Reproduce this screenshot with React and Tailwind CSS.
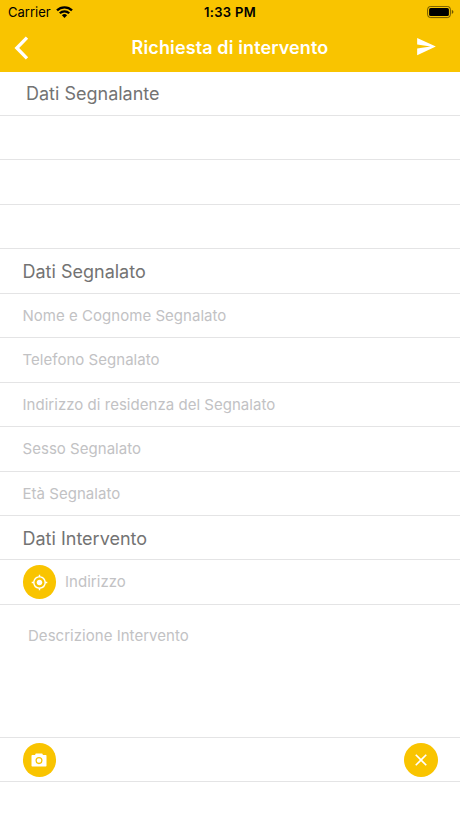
import React from 'react'
import { MdMyLocation, MdClose } from "react-icons/md";
import { IoMdSend } from "react-icons/io";

const reporterRows = ["nome", "telefono", "email"];

const reportedFields = [
  "Nome e Cognome Segnalato",
  "Telefono Segnalato",
  "Indirizzo di residenza del Segnalato",
  "Sesso Segnalato",
  "Età Segnalato",
];

const StatusBar = () => (
  <div className="h-6 grid grid-cols-3 items-center pl-2 pr-[5px] text-black">
    <div className="flex items-center gap-[5px]">
      <span className="text-[13px] leading-6 tracking-[0.02px]">Carrier</span>
      <svg width="17" height="12" viewBox="0 0 17 12" fill="none" stroke="#000" strokeWidth="2.3">
        <path d="M1 4.4a10.6 10.6 0 0 1 15 0" />
        <path d="M3.8 7.3a6.7 6.7 0 0 1 9.4 0" />
        <path d="M8.5 12 5.9 9.3a3.7 3.7 0 0 1 5.2 0Z" fill="#000" stroke="none" />
      </svg>
    </div>
    <span className="text-center text-[13px] leading-6 font-semibold tracking-[0.3px] -ml-[3px]">1:33 PM</span>
    <svg className="justify-self-end" width="28" height="13" viewBox="0 0 28 13">
      <rect x="0.6" y="0.4" width="22.8" height="11.2" rx="3" fill="none" stroke="#000" strokeOpacity="0.55" />
      <rect x="2.1" y="1.9" width="19.8" height="8.2" rx="1.6" fill="#000" />
      <path d="M24.8 4.1v3.8c1.1-.4 1.6-1.1 1.6-1.9s-.5-1.5-1.6-1.9Z" fill="#000" fillOpacity="0.55" />
    </svg>
  </div>
);

const NavBar = () => (
  <div className="flex-1 flex items-center justify-between pl-[14px] pr-[22px]">
    <button aria-label="Indietro" className="w-[31px]">
      <svg width="16" height="24" viewBox="0 0 16 24" fill="none" stroke="#fff" strokeWidth="3.3">
        <path d="M13 1.6 2.8 12 13 22.4" />
      </svg>
    </button>
    <h1 className="text-[18px] font-semibold tracking-[0.12px] text-white whitespace-nowrap">Richiesta di intervento</h1>
    <button aria-label="Invia" className="text-white pb-[2px]">
      <IoMdSend size={23} />
    </button>
  </div>
);

const CameraIcon = () => (
  <svg width="16" height="14" viewBox="0 0 16 14" fill="none">
    <path
      d="M1.2 2H4l.8-1.4h6.4L12 2h2.8c.4 0 .7.3.7.7v10.1c0 .4-.3.7-.7.7H1.2c-.4 0-.7-.3-.7-.7V2.7c0-.4.3-.7.7-.7Z"
      fill="#fff"
    />
    <circle cx="8" cy="7.6" r="2.9" stroke="#f9c400" strokeWidth="1.3" />
  </svg>
);

const Row = ({ children, className = "" }) => (
  <div className={`h-[44.44px] shrink-0 flex items-center border-b border-[#e4e4e5] px-[22.5px] ${className}`}>
    {children}
  </div>
);

const SectionTitle = ({ children }) => (
  <h2 className="text-[18px] text-[#737373]">{children}</h2>
);

const Placeholder = ({ children }) => (
  <span className="text-[15px] tracking-[0.03px] text-[#c2c2c4]">{children}</span>
);

const RoundButton = ({ label, children }) => (
  <button
    aria-label={label}
    className="size-[33.5px] rounded-full bg-[#f9c400] text-white flex items-center justify-center"
  >
    {children}
  </button>
);

export default function App() {
  return (
    <div className="w-full h-[818px] overflow-hidden bg-white flex flex-col font-['Inter',sans-serif]">
      <header className="h-[71.6px] shrink-0 bg-[#f9c400] flex flex-col">
        <StatusBar />
        <NavBar />
      </header>

      <Row className="pl-[26px] pt-px">
        <SectionTitle>Dati Segnalante</SectionTitle>
      </Row>
      {reporterRows.map((row) => (
        <Row key={row} />
      ))}

      <Row className="pt-px">
        <SectionTitle>Dati Segnalato</SectionTitle>
      </Row>
      {reportedFields.map((field) => (
        <Row key={field} className="pt-px">
          <Placeholder>{field}</Placeholder>
        </Row>
      ))}

      <Row className="pt-px">
        <SectionTitle>Dati Intervento</SectionTitle>
      </Row>
      <Row className="gap-[9px]">
        <RoundButton label="Posizione">
          <MdMyLocation size={17} />
        </RoundButton>
        <Placeholder>Indirizzo</Placeholder>
      </Row>

      {/* Description */}
      <div className="h-[133.2px] shrink-0 border-b border-[#e4e4e5] pl-[28px] pt-[18px]">
        <Placeholder>Descrizione Intervento</Placeholder>
      </div>

      {/* Attachments */}
      <Row className="justify-between">
        <RoundButton label="Scatta foto">
          <CameraIcon />
        </RoundButton>
        <RoundButton label="Rimuovi">
          <MdClose size={20} />
        </RoundButton>
      </Row>
    </div>
  );
}
